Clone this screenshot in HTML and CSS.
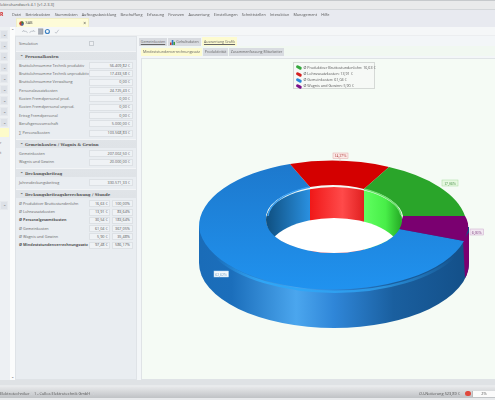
FILE: index.html
```html
<!DOCTYPE html>
<html lang="de">
<head>
<meta charset="utf-8">
<title>Elektrohandwerk</title>
<link rel="stylesheet" href="styles.css">
</head>
<body>
<div class="app">
  <header class="titlebar"><span>lektrohandwerk 4.1 [v1.2.3.3]</span></header>
  <div class="ribbon">
    <nav class="menu">
      <b class="logo">R</b>
      <span>Datei</span><span>Betriebsdaten</span><span>Stammdaten</span><span>Auftragsabwicklung</span><span>Beschaffung</span><span>Erfassung</span><span>Finanzen</span><span>Auswertung</span><span>Einstellungen</span><span>Schnittstellen</span><span>Interaktion</span><span>Management</span><span>Hilfe</span>
    </nav>
    <div class="doc-tabs">
      <div class="doc-tab">
        <svg class="doc-icon" viewBox="0 0 8 8"><circle cx="4" cy="4" r="3.6" fill="#c8402c"/><path d="M4 4V.4A3.6 3.6 0 0 1 7.6 4z" fill="#2a8a3a"/><path d="M4 4h3.6A3.6 3.6 0 0 1 4 7.6z" fill="#2a6fc0"/></svg>
        <span>SAB</span><i class="close">×</i>
      </div>
    </div>
  </div>
  <div class="workspace">
    <aside class="rail">
      <div class="rail-buttons">
        <div class="rail-btn">⌄</div><div class="rail-btn">⌄</div><div class="rail-btn">⌄</div><div class="rail-btn">⌄</div><div class="rail-btn">⌄</div><div class="rail-btn">⌄</div><div class="rail-btn">⌄</div><div class="rail-btn">⌄</div><div class="rail-btn">⌄</div>
        <div class="rail-active"></div>
        <div class="rail-text">r</div>
        <div class="rail-text">t</div>
        <div class="rail-btn rail-last">⌄</div>
      </div>
      <div class="rail-scroll"><span>⌃</span><span>⌄</span></div>
    </aside>
    <div class="content">
      <div class="toolbar">
        <svg viewBox="0 0 50 8" class="tools" fill="none" stroke-width=".9">
          <path d="M1 4.5l2-2v1.3h2.500c1 0 1.500 .8 1.500 2" stroke="#b8bdc4"/>
          <path d="M16 4.500l-2-2v1.300h-2.500c-1 0-1.500 .8-1.500 2" stroke="#b8bdc4"/>
          <rect x="20" y="1" width="5" height="6" fill="#a9afb8" stroke="#7d848e" stroke-width=".5"/>
          <circle cx="30" cy="4" r="2.300" stroke="#3f83c4" stroke-width="1.300"/>
          <path d="M38.500 4.500l1.500 1.500 3-4" stroke="#b8bdc4"/>
        </svg>
      </div>
      <div class="panes">
        <section class="form">
          <div class="row sim"><label>Simulation</label><span class="check"></span></div>

          <h2><i>⌃</i>Personalkosten</h2>
          <div class="row"><label>Bruttolohnsumme Technik produktiv</label><output>56.409,82 €</output></div>
          <div class="row"><label>Bruttolohnsumme Technik unproduktiv</label><output>17.433,58 €</output></div>
          <div class="row"><label>Bruttolohnsumme Verwaltung</label><output>0,00 €</output></div>
          <div class="row"><label>Personalzusatzkosten</label><output>24.725,43 €</output></div>
          <div class="row"><label>Kosten Fremdpersonal prod.</label><output>0,00 €</output></div>
          <div class="row"><label>Kosten Fremdpersonal unprod.</label><output>0,00 €</output></div>
          <div class="row"><label>Ertrag Fremdpersonal</label><output>0,00 €</output></div>
          <div class="row"><label>Berufsgenossenschaft</label><output>5.000,00 €</output></div>
          <div class="row sum"><label>∑ Personalkosten</label><output>103.568,83 €</output></div>

          <h2><i>⌃</i>Gemeinkosten / Wagnis &amp; Gewinn</h2>
          <div class="row"><label>Gemeinkosten</label><output>207.002,50 €</output></div>
          <div class="row"><label>Wagnis und Gewinn</label><output>20.000,00 €</output></div>

          <h2><i>⌃</i>Deckungsbeitrag</h2>
          <div class="row"><label>Jahresdeckungsbeitrag</label><output>330.571,33 €</output></div>

          <h2><i>⌃</i>Deckungsbeitragsberechnung / Stunde</h2>
          <div class="row pair"><label>Ø Produktiver Bruttostundenlohn</label><output>16,63 €</output><output>100,00%</output></div>
          <div class="row pair"><label>Ø Lohnzusatzkosten</label><output>13,91 €</output><output>83,64%</output></div>
          <div class="row pair strong"><label>Ø Personalgesamtkosten</label><output>30,54 €</output><output>183,64%</output></div>
          <div class="row pair"><label>Ø Gemeinkosten</label><output>61,04 €</output><output>367,05%</output></div>
          <div class="row pair"><label>Ø Wagnis und Gewinn</label><output>5,90 €</output><output>35,48%</output></div>
          <div class="row pair strong"><label>Ø Mindeststundenverrechnungssatz</label><output>97,48 €</output><output>586,17%</output></div>
        </section>
        <section class="report">
          <div class="tabs outer">
            <span class="tab first">Gemeinkosten</span>
            <span class="tab second"><svg viewBox="0 0 8 8" class="tab-icon"><rect x="0" y="4" width="2.500" height="4" fill="#c93a2a"/><rect x="2.800" y="0" width="2.500" height="8" fill="#2f74c4"/><rect x="5.500" y="3" width="2.500" height="5" fill="#3d9a3d"/></svg>Gehaltsdaten</span>
            <span class="tab active">Auswertung Grafik</span>
          </div>
          <div class="tabs inner">
            <span class="tab active sub1">Mindeststundenverrechnungssatz</span>
            <span class="tab sub2">Produktivität</span>
            <span class="tab sub3">Zusammenfassung Mitarbeiter</span>
          </div>
          <div class="chart">
            <div class="legend">
              <div><i class="sw green"></i>Ø Produktiver Bruttostundenlohn: 16,63 €</div>
              <div><i class="sw red"></i>Ø Lohnzusatzkosten: 13,91 €</div>
              <div><i class="sw blue"></i>Ø Gemeinkosten: 61,04 €</div>
              <div><i class="sw purple"></i>Ø Wagnis und Gewinn: 5,90 €</div>
            </div>
            <svg class="donut" viewBox="141 58 354 322">
              <defs>
                <linearGradient id="side" x1="199" x2="469" y1="0" y2="0" gradientUnits="userSpaceOnUse">
                  <stop offset="0" stop-color="#1a6cb8"/><stop offset=".12" stop-color="#1b6ebb"/><stop offset=".36" stop-color="#4ba6ee"/><stop offset=".5" stop-color="#2f86d8"/><stop offset=".72" stop-color="#1a5f9f"/><stop offset="1" stop-color="#134f88"/>
                </linearGradient>
                <linearGradient id="top" x1="0" x2="0" y1="161" y2="293" gradientUnits="userSpaceOnUse">
                  <stop offset="0" stop-color="#1d78cc"/><stop offset="1" stop-color="#2093f0"/>
                </linearGradient>
                <linearGradient id="rim" x1="215" x2="455" y1="0" y2="0" gradientUnits="userSpaceOnUse">
                  <stop offset="0" stop-color="#2fa6f6" stop-opacity="0"/><stop offset=".2" stop-color="#2fa6f6"/><stop offset=".7" stop-color="#2fa6f6" stop-opacity=".7"/><stop offset="1" stop-color="#2fa6f6" stop-opacity="0"/>
                </linearGradient>
                <linearGradient id="wallBlue" x1="266" x2="310" y1="0" y2="0" gradientUnits="userSpaceOnUse">
                  <stop offset="0" stop-color="#0f4f80"/><stop offset="1" stop-color="#2a90e0"/>
                </linearGradient>
                <linearGradient id="wallRed" x1="310" x2="364" y1="0" y2="0" gradientUnits="userSpaceOnUse">
                  <stop offset="0" stop-color="#f01818"/><stop offset=".6" stop-color="#ff4a4a"/><stop offset="1" stop-color="#e02020"/>
                </linearGradient>
                <linearGradient id="wallGreen" x1="364" x2="400" y1="0" y2="0" gradientUnits="userSpaceOnUse">
                  <stop offset="0" stop-color="#60ff60"/><stop offset=".6" stop-color="#48ee48"/><stop offset="1" stop-color="#28b028"/>
                </linearGradient>
                <clipPath id="hole"><ellipse cx="334" cy="220" rx="68" ry="33"/></clipPath>
              </defs>
              <path d="M199 227V263A135 65 0 0 0 469 263V227z" fill="url(#side)"/>
              <path d="M463 240L469 232V262Q469 272 465 278z" fill="#7a0070"/>
              <path d="M199 227A135 66 0 0 1 290 164L310 187A68 33 0 0 0 266 220A68 33 0 0 0 399 229L464 241A135 66 0 0 1 199 227z" fill="url(#top)"/>
              <path d="M290 164A135 66 0 0 1 389 167L364 189A68 33 0 0 0 310 187z" fill="#d40000"/>
              <path d="M389 167A135 66 0 0 1 465 216H403A68 33 0 0 0 364 189z" fill="#2aa52a"/>
              <path d="M465 216Q469 222 468 230L464 241L399 229L403 216z" fill="#7a0070"/>
              <path d="M215 256A135 66 0 0 0 455 256" fill="none" stroke="url(#rim)" stroke-width="2.500"/>
              <g clip-path="url(#hole)">
                <rect x="266" y="187" width="44" height="66" fill="url(#wallBlue)"/>
                <rect x="310" y="187" width="54" height="66" fill="url(#wallRed)"/>
                <rect x="364" y="187" width="40" height="66" fill="url(#wallGreen)"/>
                <ellipse cx="334" cy="251" rx="66" ry="33" fill="#fff"/>
              </g>
              <path d="M268 216A68 33 0 0 1 310 187" fill="none" stroke="#3a9ff0" stroke-width="1.500"/>
              <path d="M364 189A68 33 0 0 1 401 215" fill="none" stroke="#70e070" stroke-width="1.500"/>
              <g class="tags">
                <rect x="333" y="153" width="15" height="5.500" class="tag-red"/><text x="340.500" y="157.200" class="t-red">14,27%</text>
                <path d="M340 158.500v3" stroke="#e2a0a0" stroke-width=".5"/>
                <rect x="442" y="180" width="16" height="6" class="tag-green"/><text x="450" y="184.500" class="t-green">17,06%</text>
                <rect x="470" y="229" width="13.500" height="6" class="tag-purple"/><text x="476.700" y="233.500" class="t-purple">6,05%</text>
                <rect x="214" y="271" width="14.500" height="6" class="tag-blue"/><text x="221.200" y="275.500" class="t-blue">62,62%</text>
              </g>
            </svg>
          </div>
        </section>
      </div>
    </div>
  </div>
  <footer class="status">
    <span class="st-a">Elektrotechniker</span>
    <span class="st-b">1 - Cullos Elektrotechnik GmbH</span>
    <span class="st-fill"></span>
    <span class="st-c">CU-Notierung 523,89 €</span>
    <i class="dot"></i>
    <span class="progress">2%</span>
  </footer>
</div>
</body>
</html>
```
FILE: styles.css
```css
* { box-sizing: border-box; margin: 0; padding: 0; }
html, body { width: 495px; height: 400px; overflow: hidden; background: #e8ebef; }
body { font-family: "Open Sans", "Liberation Sans", sans-serif; font-size: 3.9px; color: #444; line-height: 1; }
.app { width: 495px; height: 400px; display: flex; flex-direction: column; filter: blur(.4px); }

.titlebar { height: 10px; flex: none; background: #e9eaeb; border-top: 1px solid #c6c9cc; border-bottom: 1px solid #d4d7da; display: flex; align-items: center; color: #555; font-size: 4px; white-space: nowrap; }

.ribbon { height: 17px; flex: none; background: #e8eaf0; position: relative; }
.menu { height: 8px; display: flex; align-items: center; gap: 4.200px; white-space: nowrap; font-size: 3.800px; color: #555; padding-top: 1px; }
.logo { color: #d02020; font-size: 5px; width: 7.800px; font-weight: 700; text-align: left; }
.doc-tabs { height: 9px; padding-left: 16px; }
.doc-tab { width: 73px; height: 9px; background: #fdfbd8; border: 1px solid #f0eec6; border-bottom: 0; display: flex; align-items: center; padding-left: 2px; gap: 1.500px; color: #555; }
.doc-icon { width: 5px; height: 5px; }
.close { margin-left: auto; margin-right: 2px; font-style: normal; font-size: 5px; color: #444; }

.workspace { flex: 1; min-height: 0; display: flex; }
.rail { width: 15px; flex: none; display: flex; background: #edf0f3; }
.rail-buttons { width: 9px; padding-top: 3px; display: flex; flex-direction: column; }
.rail-btn { height: 9px; margin-bottom: 2px; width: 8px; background: #dde1e7; border: 1px solid #e6e9ed; color: #666; font-size: 4px; display: flex; align-items: center; justify-content: center; }
.rail-active { height: 9px; margin-top: -1.500px; width: 9px; background: #fdfbc9; margin-bottom: 3px; }
.rail-text { height: 10px; font-size: 3.500px; color: #666; padding-top: 1px; }
.rail-last { margin-top: 41px; }
.rail-scroll { width: 5px; margin-left: 1px; background: #fbfcfc; display: flex; flex-direction: column; justify-content: space-between; align-items: center; font-size: 4px; color: #555; padding: 2px 0 1px; }

.content { flex: 1; min-width: 0; display: flex; flex-direction: column; }
.toolbar { height: 9px; flex: none; background: #f5f7f8; display: flex; align-items: center; padding-left: 5px; border-bottom: 1px solid #eceef0; }
.tools { width: 46px; height: 7px; }
.panes { flex: 1; min-height: 0; display: flex; }

.form { width: 122px; flex: none; background: #e9edf1; border: 1px solid #dfe3e7; padding: 1px 0 0 0; }
.row { height: 8.300px; display: flex; align-items: center; padding: 0 3.500px 0 3px; gap: 1.800px; }
.row label { flex: 1; min-width: 0; white-space: nowrap; color: #666; font-size: 3.800px; }
.row output { width: 44px; height: 7px; background: #eff2f5; border: 1px solid #dde1e5; display: flex; align-items: center; justify-content: flex-end; padding-right: 1.500px; color: #555; font-size: 3.800px; }
.pair output { width: 21.500px; }
.pair output:last-child { width: 20.500px; }
.strong label { font-weight: 700; color: #555; }
.sim { height: 11px; }
.sum { margin-top: 1px; }
.check { width: 4.500px; height: 4.500px; border: 1px solid #c8cdd2; background: #eef0f3; margin-right: 39px; }
.form h2 { height: 9px; margin: 2px 0 1.500px; background: linear-gradient(#e0e4e8, #dfe3e7); border-top: 1px solid #f2f4f6; font: 700 3.900px "DejaVu Serif", "Liberation Serif", serif; color: #555; display: flex; align-items: center; padding-left: 4px; }
.form h2 i { font-style: normal; width: 5px; font-family: "Open Sans", sans-serif; }

.report { flex: 1; min-width: 0; background: #f3f6f8; padding-top: 2px; display: flex; flex-direction: column; padding-left: 4px; }
.tabs { display: flex; flex: none; align-items: flex-end; }
.outer { height: 8px; margin-left: -2px; }
.inner { height: 10px; padding-top: 2px; background: #f1f8f1; margin-bottom: 2px; }
.tab { height: 8px; display: flex; align-items: center; justify-content: center; background: #d9dce1; color: #666; font-size: 3.600px; margin-right: 1px; white-space: nowrap; gap: 1px; }
.outer .tab { text-decoration: underline; }
.tab.active { background: #fdfbd0; color: #666; }
.first { width: 28px; }
.second { width: 33px; text-decoration: none !important; }
.outer .active { width: 35px; height: 9px; }
.sub1 { width: 61px; }
.sub2 { width: 25px; }
.sub3 { width: 55px; }
.tab-icon { width: 5px; height: 5px; }

.chart { flex: 1; min-height: 0; background: #f5fbf5; border: 1px solid #dfe3e6; border-right: 0; position: relative; }
.donut { display: block; width: 354px; height: 322px; margin-left: -1px; margin-top: -1px; }
.legend { position: absolute; left: 151px; top: 3px; width: 82px; height: 27px; background: #f6f9f6; border: 1px solid #d5d9d6; padding: 1.500px 2px; z-index: 1; font-size: 3.700px; color: #555; white-space: nowrap; }
.legend div { height: 6.200px; display: flex; align-items: center; gap: 1.500px; }
.sw { width: 6px; height: 2.500px; border-radius: 2px; transform: rotate(28deg); flex: none; }
.green { background: #36a83e; }
.red { background: #d42020; }
.blue { background: #2a86d8; }
.purple { background: #7c1088; }

.tags text { font-family: "Liberation Serif", serif; font-size: 3.800px; text-anchor: middle; }
.tag-red { fill: #fbe9e6; stroke: #e2a8a8; stroke-width: .5; }
.t-red { fill: #a83030; }
.tag-green { fill: #e6f8e0; stroke: #a8dca0; stroke-width: .5; }
.t-green { fill: #408a40; }
.tag-purple { fill: #f2e8f2; stroke: #cba8cb; stroke-width: .5; }
.t-purple { fill: #703070; }
.tag-blue { fill: #f4f9fc; stroke: #b8d8f0; stroke-width: .5; }
.t-blue { fill: #70a0c8; }

.status { height: 20px; flex: none; background: linear-gradient(#dfe2e5 0, #dfe2e5 25%, #e8eaec 25%, #e8eaec 35%, #e6e7e9 35%, #bfc2c5 90%, #e8eaec 90%); display: flex; align-items: center; color: #555; font-size: 3.900px; padding-top: 7px; white-space: nowrap; }
.st-a { width: 32px; border-right: 1px solid #cfd2d5; }
.st-b { margin-left: 2px; width: 60px; border-right: 1px solid #cfd2d5; }
.st-fill { flex: 1; }
.st-c { margin-right: 5px; }
.dot { width: 5.500px; height: 5.500px; border-radius: 50%; background: #e0483c; margin-right: 1.500px; }
.progress { width: 23px; height: 6px; background: #fbfbfb; text-align: center; line-height: 6px; border-left: 1px solid #bbb; }
```
